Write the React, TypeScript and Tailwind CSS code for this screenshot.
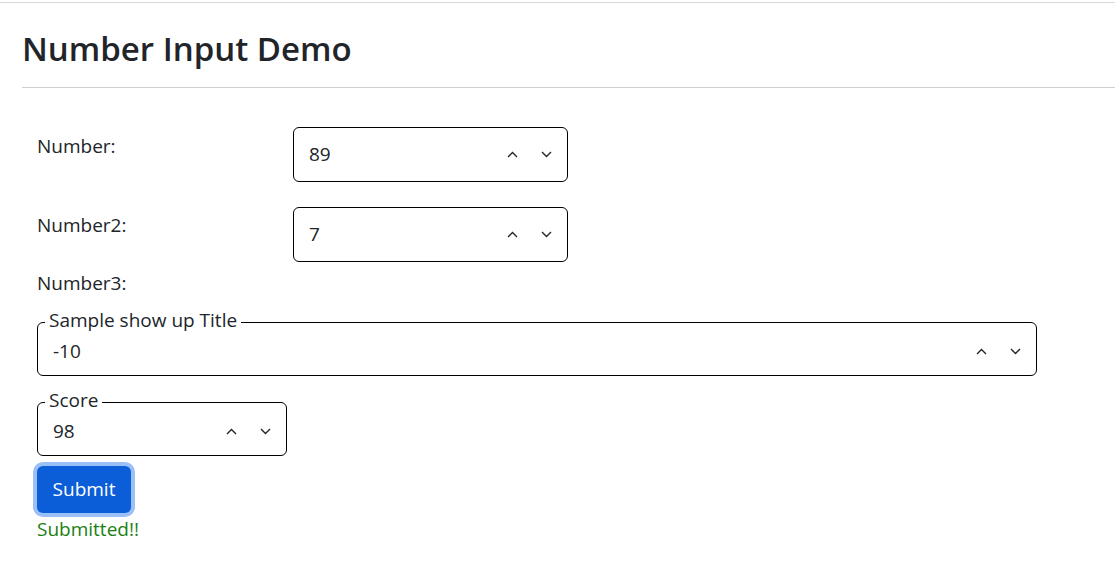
const Chevron = ({ up }: { up?: boolean }) => (
  <svg width="11" height="7" viewBox="0 0 11 7" fill="none">
    <path
      d={up ? "M1 6L5.5 1.5L10 6" : "M1 1L5.5 5.5L10 1"}
      stroke="#212529"
      strokeWidth="1.4"
    />
  </svg>
);

const Spinners = () => (
  <div className="ml-auto flex items-center gap-[23px] pr-[15px]">
    <Chevron up />
    <Chevron />
  </div>
);

const NumberBox = ({ value }: { value: string }) => (
  <div className="flex h-[55px] w-[275px] items-center rounded-[6px] border border-black pl-[15px]">
    <span>{value}</span>
    <Spinners />
  </div>
);

const Field = ({
  title,
  value,
  width,
}: {
  title: string;
  value: string;
  width: string;
}) => (
  <fieldset className={`rounded-[6px] border border-black ${width}`}>
    <legend className="ml-[7px] px-[4px] leading-6">
      <span className="relative -top-[2px]">{title}</span>
    </legend>
    <div className="mb-[12px] mt-[5px] flex h-[24px] items-center pl-[15px]">
      <span>{value}</span>
      <Spinners />
    </div>
  </fieldset>
);

export default function App() {
  return (
    <div
      className="min-h-screen bg-white text-[19px] text-[#212529]"
      style={{ fontFamily: '"Open Sans", "Noto Sans", sans-serif' }}
    >
      <div className="h-[2px]" />
      <div className="border-t border-[#d9d9d9]" />
      <div className="pl-[22px]">
        <h1 className="mt-[26px] text-[33px] font-semibold leading-[40px]">
          Number Input Demo
        </h1>
        <div className="mt-[18px] border-t border-[#cfcfcf]" />

        <div className="ml-[15px] mt-[39px] flex flex-col">
          <div className="flex items-start">
            <label className="w-[256px] pt-[7px] leading-6">Number:</label>
            <NumberBox value="89" />
          </div>
          <div className="mt-[25px] flex items-start">
            <label className="w-[256px] pt-[6px] leading-6">Number2:</label>
            <NumberBox value="7" />
          </div>
          <div className="mt-[9px] leading-6">Number3:</div>

          <div className="mt-[15px]">
            <Field title="Sample show up Title" value="-10" width="w-[1000px]" />
          </div>
          <div className="mt-[14px]">
            <Field title="Score" value="98" width="w-[250px]" />
          </div>

          <div className="mt-[10px]">
            <button className="h-[47px] w-[94px] rounded-[6px] bg-[#0b5ed7] text-white ring-4 ring-[#9bbff7]">
              Submit
            </button>
          </div>
          <div className="mt-[4px] leading-6 text-[#1a8010]">Submitted!!</div>
        </div>
      </div>
    </div>
  );
}
